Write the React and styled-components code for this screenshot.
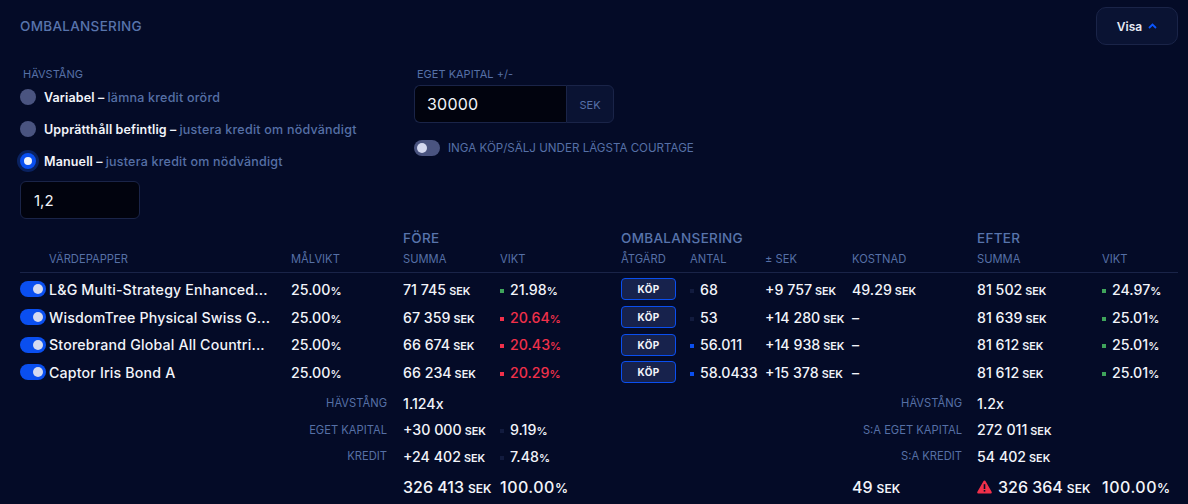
import React from 'react';
import styled, { createGlobalStyle } from 'styled-components';

const GlobalStyle = createGlobalStyle`
  html, body {
    margin: 0;
    padding: 0;
    height: 100%;
    background: #040b27;
    overflow: hidden;
  }
  body {
    font-family: Inter, "Liberation Sans", sans-serif;
    color: #f2f4fa;
  }
`

const Page = styled.div`
  width: 1188px;
  height: 504px;
  overflow: hidden;
  box-sizing: border-box;
  padding: 7px 10px 0 20px;
`

const Header = styled.div`
  display: flex;
  justify-content: space-between;
  align-items: center;
  height: 38px;
`

const Title = styled.h2`
  margin: 0;
  font-size: 13.5px;
  font-weight: 500;
  color: #5874ac;
  letter-spacing: 0.3px;
`

const VisaButton = styled.button`
  width: 82px;
  height: 38px;
  display: flex;
  align-items: center;
  justify-content: center;
  gap: 6px;
  background: #0a1333;
  border: 1px solid #1a2448;
  border-radius: 10px;
  color: #e6e9f4;
  font: 600 12px Inter, sans-serif;
  padding: 0;
`

const Options = styled.div`
  display: flex;
  margin-top: 22px;
  height: 159px;
`

const LeftOptions = styled.div`
  width: 394px;
  display: flex;
  flex-direction: column;
`

const RightOptions = styled.div`
  display: flex;
  flex-direction: column;
`

const FieldLabel = styled.div`
  font-size: 11px;
  line-height: 14px;
  color: #5670a6;
  margin-left: 3px;
`

const RadioRow = styled.label`
  display: flex;
  align-items: center;
  height: 32px;
  font-size: 12.5px;
  font-weight: 500;
  letter-spacing: 0.22px;
  color: #5670a6;
  white-space: nowrap;
`

const Radio = styled.span`
  width: 16px;
  height: 16px;
  border-radius: 50%;
  margin-right: 8px;
  box-sizing: border-box;
  flex: none;
  background: ${p => (p.$on ? '#f2f4fa' : '#4a5480')};
  border: ${p => (p.$on ? '4.5px solid #0a4ff0' : 'none')};
  box-shadow: ${p => (p.$on ? '0 0 0 3px #0a2260' : 'none')};
`

const Strong = styled.strong`
  color: #f2f4fa;
  font-weight: 600;
  letter-spacing: 0.15px;
  margin-right: 3px;
`

const BlackInput = styled.div`
  box-sizing: border-box;
  height: 38px;
  display: flex;
  align-items: center;
  background: #01030e;
  border: 1px solid #1a2448;
  color: #f2f4fa;
`

const LeverageInput = styled(BlackInput)`
  width: 120px;
  margin-top: 4px;
  padding-left: 13px;
  border-radius: 6px;
  font-size: 15px;
`

const CapitalGroup = styled.div`
  display: flex;
  margin-top: 4px;
`

const CapitalInput = styled(BlackInput)`
  width: 152px;
  padding-left: 12px;
  border-radius: 6px 0 0 6px;
  border-right: none;
  font-size: 16px;
  letter-spacing: 0.2px;
`

const Addon = styled.div`
  box-sizing: border-box;
  width: 48px;
  height: 38px;
  padding-top: 2px;
  display: flex;
  align-items: center;
  justify-content: center;
  background: #0a1333;
  border: 1px solid #1a2448;
  border-radius: 0 6px 6px 0;
  font-size: 11px;
  color: #5670a6;
`

const SwitchRow = styled.div`
  display: flex;
  align-items: center;
  gap: 8px;
  margin-top: 17px;
  font-size: 11.6px;
  color: #5670a6;
`

const Switch = styled.span`
  width: 26px;
  height: 16px;
  border-radius: 8px;
  box-sizing: border-box;
  padding: 3px;
  flex: none;
  display: flex;
  justify-content: ${p => (p.$on ? 'flex-end' : 'flex-start')};
  background: ${p => (p.$on ? '#0a4ff0' : '#4a5480')};
  &::after {
    content: '';
    width: 10px;
    height: 10px;
    border-radius: 50%;
    background: #d5daf0;
  }
`

const Table = styled.table`
  width: 1158px;
  table-layout: fixed;
  border-collapse: collapse;
  margin-top: 1px;
`

const GroupHead = styled.th`
  height: 22px;
  padding: 0;
  text-align: left;
  font-size: 13.5px;
  font-weight: 500;
  color: #5874ac;
  letter-spacing: 0.3px;
  white-space: nowrap;
`

const ColHead = styled.th`
  height: 23px;
  padding: 0 0 3px;
  box-sizing: border-box;
  text-align: left;
  font-size: 11.2px;
  font-weight: 400;
  color: #5670a6;
  border-bottom: 1px solid #1a2448;
  white-space: nowrap;
`

const Body = styled.tbody`
  &::before {
    content: '';
    display: block;
    height: 3px;
  }
`

const Row = styled.tr`
  height: 27.7px;
`

const Cell = styled.td`
  padding: 0;
  font-size: 14.2px;
  font-weight: 500;
  color: ${p => (p.$red ? '#f0304a' : '#f2f4fa')};
  white-space: nowrap;
  vertical-align: middle;
`

const Name = styled(Cell)`
  letter-spacing: 0.17px;
`

const Unit = styled.span`
  font-size: 10.8px;
  font-weight: 600;
  margin-left: 3px;
`

const Percent = styled.span`
  font-size: 11px;
  font-weight: 600;
`

const Dot = styled.i`
  display: inline-block;
  width: 4px;
  height: 4px;
  margin-right: 6px;
  vertical-align: 2px;
  background: ${p => p.$color};
`

const BuyButton = styled.button`
  display: block;
  width: 55px;
  height: 22px;
  padding: 0;
  background: #17224c;
  border: 1px solid #0a4ff0;
  border-radius: 4px;
  color: #f2f4fa;
  font: 700 10px Inter, sans-serif;
  letter-spacing: 0.3px;
`

const SummarySpacer = styled.tr`
  height: 4px;
`

const SummaryRow = styled.tr`
  height: 26.4px;
`

const TotalRow = styled.tr`
  height: 36px;
`

const SummaryLabel = styled.td`
  padding: 0 ${p => (p.$after ? 15 : 16)}px 0 0;
  text-align: right;
  font-size: 11.2px;
  color: #5670a6;
  white-space: nowrap;
`

const TotalCell = styled.td`
  padding: 0;
  font-size: 16px;
  font-weight: 500;
  color: #f2f4fa;
  white-space: nowrap;
`

const TotalUnit = styled.span`
  font-size: 12px;
  font-weight: 600;
  margin-left: 4px;
`

const TotalShare = styled.span`
  letter-spacing: 0.5px;
`

const TotalPercent = styled.span`
  font-size: 13px;
  font-weight: 600;
`

const WarnIcon = styled.svg`
  position: absolute;
  left: 0;
  top: 50%;
  margin-top: -7px;
  width: 15px;
  height: 14px;
`

const WarnWrap = styled.div`
  position: relative;
  padding-left: 21px;
`

const GREEN = '#3fa45b'
const RED = '#f0304a'
const BLUE = '#0a4ff0'
const DIM = '#121b3e'

const holdings = [
  { name: 'L&G Multi-Strategy Enhanced...', before: '71 745', weight: '21.98', red: false, amount: '68', amountDot: DIM, delta: '+9 757', cost: '49.29', after: '81 502', afterWeight: '24.97' },
  { name: 'WisdomTree Physical Swiss G...', before: '67 359', weight: '20.64', red: true, amount: '53', amountDot: DIM, delta: '+14 280', cost: null, after: '81 639', afterWeight: '25.01' },
  { name: 'Storebrand Global All Countri...', before: '66 674', weight: '20.43', red: true, amount: '56.011', amountDot: BLUE, delta: '+14 938', cost: null, after: '81 612', afterWeight: '25.01' },
  { name: 'Captor Iris Bond A', before: '66 234', weight: '20.29', red: true, amount: '58.0433', amountDot: BLUE, delta: '+15 378', cost: null, after: '81 612', afterWeight: '25.01' },
];

const colWidths = [29, 242, 112, 97, 121, 69, 75, 87, 125, 125, 76];

function App() {
  return (
    <Page>
      <GlobalStyle />
      <Header>
        <Title>OMBALANSERING</Title>
        <VisaButton>
          Visa
          <svg width="9" height="6" viewBox="0 0 9 6" fill="none">
            <path d="M1 5l3.5-3.5L8 5" stroke="#0a55ff" strokeWidth="1.8" />
          </svg>
        </VisaButton>
      </Header>

      <Options>
        <LeftOptions>
          <FieldLabel>HÄVSTÅNG</FieldLabel>
          <RadioRow><Radio /><Strong>Variabel –</Strong>lämna kredit orörd</RadioRow>
          <RadioRow><Radio /><Strong>Upprätthåll befintlig –</Strong>justera kredit om nödvändigt</RadioRow>
          <RadioRow><Radio $on /><Strong>Manuell –</Strong>justera kredit om nödvändigt</RadioRow>
          <LeverageInput>1,2</LeverageInput>
        </LeftOptions>
        <RightOptions>
          <FieldLabel>EGET KAPITAL +/-</FieldLabel>
          <CapitalGroup>
            <CapitalInput>30000</CapitalInput>
            <Addon>SEK</Addon>
          </CapitalGroup>
          <SwitchRow><Switch />INGA KÖP/SÄLJ UNDER LÄGSTA COURTAGE</SwitchRow>
        </RightOptions>
      </Options>

      <Table>
        <colgroup>
          {colWidths.map((w, i) => <col key={i} width={w} />)}
        </colgroup>
        <thead>
          <tr>
            <GroupHead colSpan={3} />
            <GroupHead colSpan={2}>FÖRE</GroupHead>
            <GroupHead colSpan={4}>OMBALANSERING</GroupHead>
            <GroupHead colSpan={2}>EFTER</GroupHead>
          </tr>
          <tr>
            <ColHead />
            <ColHead>VÄRDEPAPPER</ColHead>
            <ColHead>MÅLVIKT</ColHead>
            <ColHead>SUMMA</ColHead>
            <ColHead>VIKT</ColHead>
            <ColHead>ÅTGÄRD</ColHead>
            <ColHead>ANTAL</ColHead>
            <ColHead>± SEK</ColHead>
            <ColHead>KOSTNAD</ColHead>
            <ColHead>SUMMA</ColHead>
            <ColHead>VIKT</ColHead>
          </tr>
        </thead>
        <Body>
          {holdings.map((h) => (
            <Row key={h.name}>
              <Cell><Switch $on /></Cell>
              <Name>{h.name}</Name>
              <Cell>25.00<Percent>%</Percent></Cell>
              <Cell>{h.before}<Unit>SEK</Unit></Cell>
              <Cell $red={h.red}>
                <Dot $color={h.red ? RED : GREEN} />{h.weight}<Percent>%</Percent>
              </Cell>
              <Cell><BuyButton>KÖP</BuyButton></Cell>
              <Cell><Dot $color={h.amountDot} />{h.amount}</Cell>
              <Cell>{h.delta}<Unit>SEK</Unit></Cell>
              <Cell>{h.cost ? <>{h.cost}<Unit>SEK</Unit></> : '–'}</Cell>
              <Cell>{h.after}<Unit>SEK</Unit></Cell>
              <Cell><Dot $color={GREEN} />{h.afterWeight}<Percent>%</Percent></Cell>
            </Row>
          ))}
          <SummarySpacer />
          <SummaryRow>
            <SummaryLabel colSpan={3}>HÄVSTÅNG</SummaryLabel>
            <Cell>1.124x</Cell>
            <Cell />
            <SummaryLabel $after colSpan={4}>HÄVSTÅNG</SummaryLabel>
            <Cell>1.2x</Cell>
            <Cell />
          </SummaryRow>
          <SummaryRow>
            <SummaryLabel colSpan={3}>EGET KAPITAL</SummaryLabel>
            <Cell>+30 000<Unit>SEK</Unit></Cell>
            <Cell><Dot $color={DIM} />9.19<Percent>%</Percent></Cell>
            <SummaryLabel $after colSpan={4}>S:A EGET KAPITAL</SummaryLabel>
            <Cell>272 011<Unit>SEK</Unit></Cell>
            <Cell />
          </SummaryRow>
          <SummaryRow>
            <SummaryLabel colSpan={3}>KREDIT</SummaryLabel>
            <Cell>+24 402<Unit>SEK</Unit></Cell>
            <Cell><Dot $color={DIM} />7.48<Percent>%</Percent></Cell>
            <SummaryLabel $after colSpan={4}>S:A KREDIT</SummaryLabel>
            <Cell>54 402<Unit>SEK</Unit></Cell>
            <Cell />
          </SummaryRow>
          <TotalRow>
            <TotalCell colSpan={3} />
            <TotalCell>326 413<TotalUnit>SEK</TotalUnit></TotalCell>
            <TotalCell><TotalShare>100.00</TotalShare><TotalPercent>%</TotalPercent></TotalCell>
            <TotalCell colSpan={3} />
            <TotalCell>49<TotalUnit>SEK</TotalUnit></TotalCell>
            <TotalCell>
              <WarnWrap>
                <WarnIcon viewBox="0 0 15 14">
                  <path d="M7.5 0.5c.5 0 .9.3 1.1.7l6 10.6c.5.8-.1 1.8-1.1 1.8H1.5c-1 0-1.6-1-1.1-1.8l6-10.6c.2-.4.6-.7 1.1-.7z" fill="#f0304a" />
                  <rect x="6.7" y="4.2" width="1.6" height="4.8" fill="#040b27" />
                  <rect x="6.7" y="10" width="1.6" height="1.6" fill="#040b27" />
                </WarnIcon>
                326 364<TotalUnit>SEK</TotalUnit>
              </WarnWrap>
            </TotalCell>
            <TotalCell><TotalShare>100.00</TotalShare><TotalPercent>%</TotalPercent></TotalCell>
          </TotalRow>
        </Body>
      </Table>
    </Page>
  );
}

export default App;
